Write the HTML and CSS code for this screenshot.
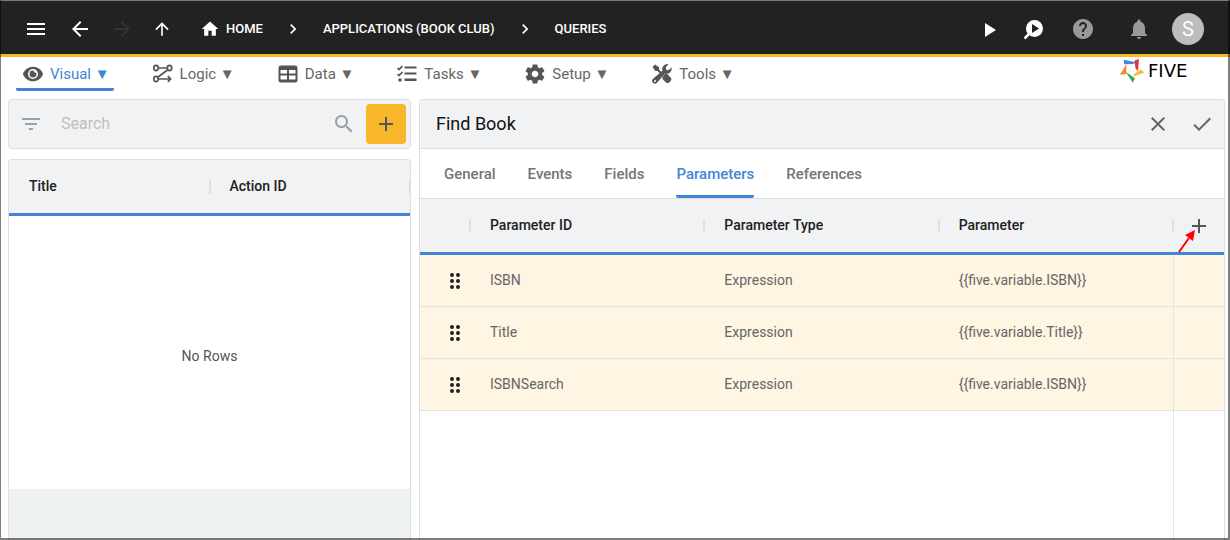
FILE: index.html
```html
<!DOCTYPE html>
<html lang="en">
<head>
<meta charset="utf-8">
<title>Five - Queries</title>
<link rel="stylesheet" href="styles.css">
</head>
<body>
<div class="app">
  <header class="topbar">
    <div class="history">
      <button class="icon-btn menu-btn" aria-label="Menu"><svg width="24" height="24" viewBox="0 0 24 24"><path d="M3 18h18v-2H3v2zm0-5h18v-2H3v2zm0-7v2h18V6H3z"/></svg></button>
      <button class="icon-btn" aria-label="Back"><svg width="24" height="24" viewBox="0 0 24 24"><path d="M20 11H7.83l5.59-5.59L12 4l-8 8 8 8 1.41-1.41L7.83 13H20v-2z"/></svg></button>
      <button class="icon-btn" aria-label="Forward" disabled><svg width="24" height="24" viewBox="0 0 24 24"><path d="M12 4l-1.41 1.41L16.17 11H4v2h12.17l-5.58 5.59L12 20l8-8z"/></svg></button>
      <button class="icon-btn" aria-label="Up"><svg width="20" height="20" viewBox="0 0 24 24"><path d="M4 12l1.41 1.41L11 7.83V20h2V7.83l5.58 5.59L20 12l-8-8-8 8z"/></svg></button>
    </div>
    <nav class="crumbs" aria-label="Breadcrumb">
      <a class="crumb" href="#"><svg width="20" height="20" viewBox="0 0 24 24"><path d="M10 20v-6h4v6h5v-8h3L12 3 2 12h3v8z"/></svg>HOME</a>
      <svg class="sep" width="20" height="20" viewBox="0 0 24 24"><path d="M10 6L8.59 7.41 13.17 12l-4.58 4.59L10 18l6-6z"/></svg>
      <a class="crumb" href="#">APPLICATIONS (BOOK CLUB)</a>
      <svg class="sep" width="20" height="20" viewBox="0 0 24 24"><path d="M10 6L8.59 7.41 13.17 12l-4.58 4.59L10 18l6-6z"/></svg>
      <a class="crumb" href="#">QUERIES</a>
    </nav>
    <div class="actions">
      <button class="icon-btn" aria-label="Run"><svg width="24" height="24" viewBox="0 0 24 24"><path d="M7 6v14l11-7z"/></svg></button>
      <button class="icon-btn" aria-label="Inspect"><svg width="24" height="24" viewBox="0 0 24 24"><circle cx="13.5" cy="11.5" r="8.5"/><path d="M8.500 16.500L3.500 21.500" stroke="#fff" stroke-width="2.500"/><path class="cut" d="M11 7v9l7-4.500z"/></svg></button>
      <button class="icon-btn muted help-btn" aria-label="Help"><svg width="24" height="24" viewBox="0 0 24 24"><path d="M12 2C6.480 2 2 6.480 2 12s4.480 10 10 10 10-4.480 10-10S17.520 2 12 2zm1 17h-2v-2h2v2zm2.070-7.750l-.9.920C13.450 12.900 13 13.500 13 15h-2v-.5c0-1.100.45-2.100 1.170-2.830l1.240-1.260c.37-.36.59-.86.59-1.410 0-1.100-.9-2-2-2s-2 .9-2 2H8c0-2.210 1.790-4 4-4s4 1.790 4 4c0 .88-.36 1.680-.93 2.250z"/></svg></button>
      <button class="icon-btn muted" aria-label="Notifications"><svg width="24" height="24" viewBox="0 0 24 24"><path d="M12 22c1.100 0 2-.9 2-2h-4c0 1.100.9 2 2 2zm6-6v-5c0-3.070-1.630-5.640-4.500-6.320V4c0-.83-.67-1.500-1.500-1.500s-1.500.67-1.500 1.500v.68C7.640 5.360 6 7.920 6 11v5l-2 2v1h16v-1l-2-2z"/></svg></button>
      <button class="avatar" aria-label="Account">S</button>
    </div>
  </header>

  <div class="menubar">
    <nav class="menus" aria-label="Main">
      <button class="menu active"><svg width="22" height="22" viewBox="0 0 24 24"><path d="M12 4C7 4 2.700 7.200 1 12c1.700 4.800 6 8 11 8s9.300-3.200 11-8c-1.700-4.800-6-8-11-8zm0 13.500a5.500 5.500 0 1 1 0-11 5.500 5.500 0 0 1 0 11zm0-9.300a3.800 3.800 0 1 0 3.800 3.800c0-.5-.1-1-.3-1.400a2 2 0 0 1-2.600-2.300c-.3-.1-.6-.1-.9-.1z"/></svg><span>Visual ▼</span></button>
      <button class="menu"><svg width="22" height="22" viewBox="0 0 22 22"><g class="line thin"><ellipse cx="4" cy="5" rx="2.200" ry="2.600"/><ellipse cx="17.500" cy="5" rx="2.200" ry="2.600"/><ellipse cx="4" cy="16" rx="2.200" ry="2.600"/><path d="M6.200 5h9M15.800 6.800L5.800 14.200M6.200 16h12M15.800 13.200l2.800 2.800-2.800 2.800"/></g></svg><span>Logic ▼</span></button>
      <button class="menu"><svg width="22" height="22" viewBox="0 0 22 22"><path fill-rule="evenodd" d="M4 2.500h14a2.500 2.500 0 0 1 2.500 2.500v12a2.500 2.500 0 0 1-2.500 2.500H4A2.500 2.500 0 0 1 1.500 17V5A2.500 2.500 0 0 1 4 2.500zM3.500 7v3.500H10V7zm8.500 0v3.500h6.500V7zM3.500 12.500v4H10v-4zm8.500 0v4h6.500v-4z"/></svg><span>Data ▼</span></button>
      <button class="menu"><svg width="22" height="22" viewBox="0 0 22 22"><path d="M8.500 3.500h12v2h-12zM8.500 9.500h12v2h-12zM8.500 15.500h12v2.500h-12z"/><circle cx="4" cy="17" r="1.800"/><path class="line thin" d="M1.500 5l1.500 1.500L6.500 3M1.500 11L3 12.500 6.500 9"/></svg><span>Tasks ▼</span></button>
      <button class="menu"><svg width="22" height="22" viewBox="1 1 22 22"><path d="M19.140 12.940c.04-.3.06-.61.06-.94 0-.32-.02-.64-.07-.94l2.030-1.580c.18-.14.23-.41.12-.61l-1.920-3.320c-.12-.22-.37-.29-.59-.22l-2.390.96c-.5-.38-1.030-.7-1.620-.94l-.36-2.540c-.04-.24-.24-.41-.48-.41h-3.840c-.24 0-.43.17-.47.41l-.36 2.540c-.59.24-1.130.57-1.620.94l-2.390-.96c-.22-.08-.47 0-.59.22L2.740 8.870c-.12.210-.08.470.12.610l2.030 1.580c-.05.3-.09.63-.09.94s.02.64.07.94l-2.030 1.580c-.18.14-.23.41-.12.61l1.920 3.320c.12.22.37.29.59.22l2.390-.96c.5.38 1.030.7 1.620.94l.36 2.540c.05.24.24.41.48.41h3.840c.24 0 .44-.17.47-.41l.36-2.540c.59-.24 1.130-.56 1.620-.94l2.390.96c.22.08.47 0 .59-.22l1.920-3.320c.12-.22.07-.47-.12-.61l-2.010-1.580zM12 15.300c-1.820 0-3.300-1.480-3.300-3.300s1.480-3.300 3.300-3.300 3.300 1.480 3.300 3.300-1.480 3.300-3.300 3.300z"/></svg><span>Setup ▼</span></button>
      <button class="menu"><svg width="22" height="22" viewBox="0 0 22 22"><path d="M1.500 4l2.500-2.500L8 4.300v2.300l4 4-1.500 1.500-4-4H4.300z"/><path d="M11.500 13.500l3-3 1.500.3 3.800 3.900c2.200 2.200-2.600 7-4.800 4.800l-3.500-3.500z"/><path d="M17.500 1.300a5 5 0 0 0-6 6.400L2 15.800a2.800 2.800 0 1 0 4 4l8-9.300a5 5 0 0 0 6.500-6l-3 2.700-2.300-.4-.4-2.500z"/><circle class="hole" cx="4" cy="18" r="1"/></svg><span>Tools ▼</span></button>
    </nav>
    <div class="logo">
      <svg width="24" height="24" viewBox="570 177 72 72"><path fill="#4285d8" d="M581 179l35 8-6 5-27 1z"/><path fill="#e53238" d="M613 182l14-5-3 36-7-7z"/><path fill="#fbb92c" d="M611 223l23-15 8 10-30 11z"/><path fill="#3fa75a" d="M587 215l28 20-7 13z"/><path fill="#f58232" d="M589 192v30l-19 2z"/></svg>
      <span>FIVE</span>
    </div>
  </div>

  <main class="content">
    <section class="side">
      <div class="search">
        <svg width="24" height="24" viewBox="0 0 24 24"><path d="M10 18h4v-2h-4v2zM3 6v2h18V6H3zm3 7h12v-2H6v2z"/></svg>
        <input type="text" placeholder="Search" aria-label="Search">
        <svg width="24" height="24" viewBox="0 0 24 24"><path d="M15.500 14h-.79l-.28-.27C15.410 12.590 16 11.110 16 9.500 16 5.910 13.090 3 9.500 3S3 5.910 3 9.500 5.910 16 9.500 16c1.610 0 3.090-.59 4.230-1.570l.27.28v.79l5 4.990L20.490 19l-4.990-5zm-6 0C7.010 14 5 11.990 5 9.500S7.010 5 9.500 5 14 7.010 14 9.500 11.990 14 9.500 14z"/></svg>
        <button class="add-btn" aria-label="Add"><svg width="24" height="24" viewBox="0 0 24 24"><path d="M19 13h-6v6h-2v-6H5v-2h6V5h2v6h6v2z"/></svg></button>
      </div>
      <div class="list">
        <table class="grid">
          <thead><tr><th scope="col">Title</th><th scope="col">Action ID</th></tr></thead>
        </table>
        <div class="empty">No Rows</div>
        <div class="list-foot"></div>
      </div>
    </section>

    <section class="detail">
      <div class="detail-head">
        <h1>Find Book</h1>
        <button class="icon-btn" aria-label="Cancel"><svg width="24" height="24" viewBox="0 0 24 24"><path d="M19 6.410L17.590 5 12 10.590 6.410 5 5 6.410 10.590 12 5 17.590 6.410 19 12 13.410 17.590 19 19 17.590 13.410 12z"/></svg></button>
        <button class="icon-btn" aria-label="Save"><svg width="24" height="24" viewBox="0 0 24 24"><path d="M9 16.170L4.830 12l-1.420 1.410L9 19 21 7l-1.410-1.410z"/></svg></button>
      </div>
      <div class="tabs" role="tablist">
        <button class="tab" role="tab">General</button>
        <button class="tab" role="tab">Events</button>
        <button class="tab" role="tab">Fields</button>
        <button class="tab active" role="tab" aria-selected="true">Parameters</button>
        <button class="tab" role="tab">References</button>
      </div>
      <table class="grid params">
        <colgroup><col class="handle-col"><col><col><col><col class="add-col"></colgroup>
        <thead><tr>
          <th></th><th scope="col">Parameter ID</th><th scope="col">Parameter Type</th><th scope="col">Parameter</th>
          <th class="add-cell"><button class="icon-btn" aria-label="Add parameter"><svg width="24" height="24" viewBox="0 0 24 24"><path d="M19 13h-6v6h-2v-6H5v-2h6V5h2v6h6v2z"/></svg></button><svg class="pointer" width="18" height="24" viewBox="0 0 18 24"><path d="M1 23L11 9" stroke="#f00" stroke-width="2"/><path fill="#f00" d="M17 1L7 6l8 6z"/></svg></th>
        </tr></thead>
        <tbody>
          <tr><td class="drag"><svg width="12" height="18" viewBox="0 0 12 18"><circle cx="3" cy="3" r="2"/><circle cx="9" cy="3" r="2"/><circle cx="3" cy="9" r="2"/><circle cx="9" cy="9" r="2"/><circle cx="3" cy="15" r="2"/><circle cx="9" cy="15" r="2"/></svg></td><td>ISBN</td><td>Expression</td><td>{{five.variable.ISBN}}</td><td></td></tr>
          <tr><td class="drag"><svg width="12" height="18" viewBox="0 0 12 18"><circle cx="3" cy="3" r="2"/><circle cx="9" cy="3" r="2"/><circle cx="3" cy="9" r="2"/><circle cx="9" cy="9" r="2"/><circle cx="3" cy="15" r="2"/><circle cx="9" cy="15" r="2"/></svg></td><td>Title</td><td>Expression</td><td>{{five.variable.Title}}</td><td></td></tr>
          <tr><td class="drag"><svg width="12" height="18" viewBox="0 0 12 18"><circle cx="3" cy="3" r="2"/><circle cx="9" cy="3" r="2"/><circle cx="3" cy="9" r="2"/><circle cx="9" cy="9" r="2"/><circle cx="3" cy="15" r="2"/><circle cx="9" cy="15" r="2"/></svg></td><td>ISBNSearch</td><td>Expression</td><td>{{five.variable.ISBN}}</td><td></td></tr>
        </tbody>
      </table>
      <div class="grid-rest"></div>
    </section>
  </main>
</div>
</body>
</html>
```
FILE: styles.css
```css
* { box-sizing: border-box; }
body {
  margin: 0;
  background: #fff;
  color: #212121;
  font: 14px/20px Roboto, "Liberation Sans", sans-serif;
}
svg { display: block; flex: none; fill: currentColor; }
button {
  border: 0;
  padding: 0;
  background: none;
  color: inherit;
  font: inherit;
  cursor: pointer;
}
.icon-btn { display: block; }
.app {
  position: relative;
  display: flex;
  flex-direction: column;
  min-height: 100vh;
}
/* window frame drawn over the content edges */
.app::after {
  content: "";
  position: absolute;
  z-index: 2;
  inset: 0;
  border: solid rgba(0, 0, 0, 0.5);
  border-width: 1px 2px 2px 1px;
  border-top-color: #7a7a7a;
  pointer-events: none;
}
.line { fill: none; stroke: currentColor; stroke-width: 2; }
.thin { stroke-width: 1.7; }

/* top bar */
.topbar {
  display: flex;
  align-items: center;
  height: 57px;
  padding: 3px 26px 0 24px;
  background: #222;
  border-bottom: 3px solid #f8b62b;
  color: #fff;
}
.history { display: flex; align-items: center; gap: 18px; }
.menu-btn { margin-right: 2px; }
.history :disabled { color: #333; }
.crumbs {
  display: flex;
  align-items: center;
  gap: 20px;
  margin-left: 28px;
  font-size: 13px;
  font-weight: 500;
}
.crumb {
  display: flex;
  align-items: center;
  gap: 6px;
  color: #fff;
  text-decoration: none;
}
.actions { display: flex; align-items: center; gap: 19px; margin-left: auto; }
.help-btn { margin: 0 13px 0 7px; }
.muted { color: #999; }
.cut { fill: #222; }
.avatar {
  width: 32px;
  height: 32px;
  margin-left: 2px;
  border-radius: 50%;
  background: #bdbdbd;
  color: #fff;
  font-size: 20px;
}

/* menus */
.menubar {
  display: flex;
  justify-content: space-between;
  height: 42px;
  padding: 0 22px 0 16px;
}
.menus { display: flex; gap: 32px; }
.menu {
  display: flex;
  align-items: center;
  gap: 6px;
  height: 34px;
  padding: 3px 4px 0 6px;
  border-bottom: 3px solid transparent;
  border-radius: 2px;
  color: #666;
  font-size: 15px;
}
.menu svg { color: #555; }
.menu.active { border-color: #4285d8; color: #4285d8; }
.hole { fill: #fff; }
.logo {
  display: flex;
  gap: 4px;
  width: 88px;
  padding-top: 2px;
  color: #000;
  font: 18px/24px "DejaVu Sans", sans-serif;
}

/* panels */
.content {
  flex: 1;
  display: grid;
  grid-template-columns: 1fr 2fr;
  gap: 8px;
  padding: 0 5px 0 8px;
}
.side { display: flex; flex-direction: column; gap: 10px; }
.search {
  display: flex;
  align-items: center;
  height: 50px;
  padding: 0 4px 0 10px;
  background: #f1f2f4;
  border: 1px solid #dedede;
  border-radius: 4px;
  color: #9aa0a6;
}
.search input {
  flex: 1;
  min-width: 0;
  padding: 0 18px;
  border: 0;
  background: none;
  font: 16px/24px Roboto, sans-serif;
}
.search input::placeholder { color: #bdbfc1; }
.add-btn {
  display: grid;
  place-items: center;
  width: 40px;
  height: 40px;
  margin-left: 10px;
  border-radius: 4px;
  background: #f8b62b;
  color: #555;
}
.list,
.detail {
  display: flex;
  flex-direction: column;
  overflow: hidden;
  border: 1px solid #dedede;
  border-bottom: 0;
  border-radius: 4px 4px 0 0;
}
.list { flex: 1; }
.empty {
  flex: 1;
  display: grid;
  place-items: center;
  padding-top: 6px;
  color: #555;
}
.list-foot { height: 51px; background: #eef2f3; }

/* tables */
.grid { width: 100%; table-layout: fixed; border-spacing: 0; }
.grid th {
  position: relative;
  height: 56px;
  padding: 0 20px 2px;
  background: #f1f2f4;
  border-bottom: 3px solid #4285d8;
  font-weight: 500;
  text-align: left;
}
.grid th::after {
  content: "";
  position: absolute;
  z-index: 1;
  top: 20px;
  right: -1px;
  width: 2px;
  height: 14px;
  background: #dedfe1;
}
.grid td {
  height: 52px;
  padding: 0 20px 2px;
  background: #fff5e3;
  border-bottom: 1px solid #e3e3e3;
  color: #666;
}
.grid td:last-child { border-left: 1px solid #e3e3e3; }
.handle-col { width: 50px; }
.add-col { width: 51px; }
.grid .drag { padding: 0 0 0 29px; color: #212121; }
.grid .add-cell { padding: 0 0 0 14px; color: #555; }
.grid .add-cell::after { display: none; }
.pointer { position: absolute; left: 5px; top: 30px; }
.grid-rest {
  flex: 1;
  align-self: flex-end;
  width: 51px;
  border-left: 1px solid #e3e3e3;
}

/* detail */
.detail-head {
  display: flex;
  align-items: center;
  gap: 20px;
  height: 49px;
  padding: 0 10px 0 16px;
  background: #f1f2f4;
  border-bottom: 1px solid #dedede;
  color: #666;
}
h1 {
  flex: 1;
  margin: 0;
  color: #111;
  font-size: 18px;
  font-weight: 400;
}
.tabs {
  display: flex;
  gap: 32px;
  height: 50px;
  padding: 0 24px;
  border-bottom: 1px solid #dedede;
}
.tab {
  padding-top: 3px;
  border-bottom: 3px solid transparent;
  border-radius: 2px;
  color: #757575;
  font-size: 15px;
  font-weight: 500;
}
.tab.active { border-color: #4285d8; color: #4285d8; }
```
